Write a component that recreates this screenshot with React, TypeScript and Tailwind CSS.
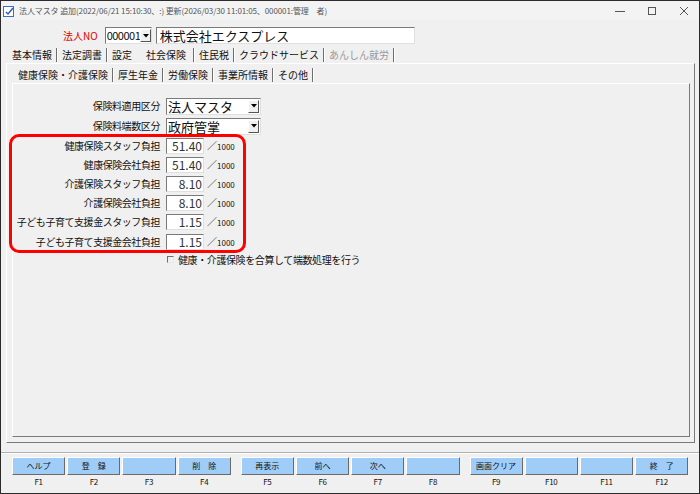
import React from 'react';

const mainTabs = [
  { label: '基本情報', sep: true },
  { label: '法定調書', sep: true },
  { label: '設定', sep: false },
  { label: '社会保険', sep: true, active: true },
  { label: '住民税', sep: true },
  { label: 'クラウドサービス', sep: true },
  { label: 'あんしん就労', sep: true, disabled: true },
];

const subTabs = ['健康保険・介護保険', '厚生年金', '労働保険', '事業所情報', 'その他'];

const rates = [
  { label: '健康保険スタッフ負担', value: '51.40' },
  { label: '健康保険会社負担', value: '51.40' },
  { label: '介護保険スタッフ負担', value: '8.10' },
  { label: '介護保険会社負担', value: '8.10' },
  { label: '子ども子育て支援金スタッフ負担', value: '1.15' },
  { label: '子ども子育て支援金会社負担', value: '1.15' },
];

const fkeys = [
  ['ヘルプ', '登　録', '', '削　除'],
  ['再表示', '前へ', '次へ', ''],
  ['画面クリア', '', '', '終　了'],
];

function Separator() {
  return <span className="w-[2px] h-[14px] border-l border-[#6e6e6e] border-r border-r-white" />;
}

function DropButton() {
  return (
    <div className="flex items-center justify-center w-[11px] h-[13px] bg-[#f0f0f0] border border-t-white border-l-white border-r-[#555] border-b-[#555]">
      <svg width="6" height="4" viewBox="0 0 6 4">
        <path d="M0 0h6L3 3.5z" fill="#000" />
      </svg>
    </div>
  );
}

function SelectBox({ value }: { value: string }) {
  return (
    <div className="flex items-center justify-between w-[95px] h-[17px] bg-white border border-t-[#7a7a7a] border-l-[#7a7a7a] border-r-[#e0e0e0] border-b-[#e0e0e0] pl-[1px] pr-[1px]">
      <span className="text-[13px] leading-none text-[#111]">{value}</span>
      <DropButton />
    </div>
  );
}

export default function App() {
  return (
    <div className="relative w-[700px] h-[494px] bg-[#f0f0f0] border border-[#2b2b2b] overflow-hidden flex flex-col font-['Noto_Sans_CJK_JP',sans-serif] text-[#111]">
      {/* Title bar */}
      <div className="h-[19px] flex items-center bg-[#f3f3f3] shrink-0">
        <svg className="ml-[2px]" width="12" height="12" viewBox="0 0 12 12">
          <rect x="0.5" y="1.5" width="10" height="10" fill="#fff" stroke="#3b6fc4" />
          <path d="M3 7l2 2 5-6" stroke="#2d5fb8" strokeWidth="1.5" fill="none" />
        </svg>
        <span className="ml-[4px] text-[8px] leading-none text-[#555] tracking-[-0.1px] whitespace-nowrap">
          法人マスタ 追加(2022/06/21 15:10:30、:) 更新(2026/03/30 11:01:05、000001:管理　者)
        </span>
        <div className="ml-auto flex items-center gap-[22px] mr-[10px]">
          <svg width="10" height="10" viewBox="0 0 10 10">
            <path d="M0 5.5h10" stroke="#555" strokeWidth="1" />
          </svg>
          <svg width="10" height="10" viewBox="0 0 10 10">
            <rect x="1.5" y="1.5" width="7" height="7" fill="none" stroke="#555" strokeWidth="1" />
          </svg>
          <svg width="10" height="10" viewBox="0 0 10 10">
            <path d="M1 1l8 8M9 1l-8 8" stroke="#555" strokeWidth="1" />
          </svg>
        </div>
      </div>

      {/* Header row */}
      <div className="mt-[7px] h-[17px] flex items-center pl-[62px] shrink-0">
        <span className="text-[10px] text-[#e00000] leading-none">法人NO</span>
        <div className="ml-[7px] flex items-center w-[47px] h-[17px] bg-white border border-t-[#7a7a7a] border-l-[#7a7a7a] border-r-[#e0e0e0] border-b-[#e0e0e0] pl-[1px]">
          <span className="text-[11px] leading-none tracking-[-0.5px]">000001</span>
          <div className="ml-auto mr-[1px]">
            <DropButton />
          </div>
        </div>
        <div className="ml-[4px] flex items-center w-[259px] h-[17px] bg-white border border-t-[#7a7a7a] border-l-[#7a7a7a] border-r-[#e0e0e0] border-b-[#e0e0e0] pl-[3px]">
          <span className="text-[13px] leading-none">株式会社エクスプレス</span>
        </div>
      </div>

      {/* Main tabs */}
      <div className="mt-[3px] h-[16px] flex items-center pl-[7px] shrink-0 text-[10px] leading-none">
        {mainTabs.map((t) => (
          <React.Fragment key={t.label}>
            <span
              className={
                (t.active ? 'pl-[10px] pr-[7px] ' : 'px-[4px] ') +
                (t.disabled ? 'text-[#9a9a9a]' : 'text-[#111]')
              }
            >
              {t.label}
            </span>
            {t.sep && <Separator />}
          </React.Fragment>
        ))}
      </div>

      {/* Outer panel */}
      <div className="ml-[5px] w-[689px] h-[380px] flex flex-col border border-t-white border-l-white border-r-[#7a7a7a] border-b-[#7a7a7a] shrink-0">
        <div className="mt-[3px] h-[16px] flex items-center pl-[7px] text-[10px] leading-none">
          {subTabs.map((t, i) => (
            <React.Fragment key={t}>
              <span className={i === 0 ? 'pl-[4px] pr-[4px]' : 'px-[4px]'}>{t}</span>
              <Separator />
            </React.Fragment>
          ))}
        </div>

        {/* Inner panel */}
        <div className="ml-[5px] w-[678px] h-[354px] border border-t-white border-l-white border-r-[#7a7a7a] border-b-[#7a7a7a] pt-[12px]">
          <div className="flex items-center h-[20px]">
            <div className="w-[147px] text-right text-[10px] tracking-[-0.4px] leading-none">保険料適用区分</div>
            <div className="ml-[6px]">
              <SelectBox value="法人マスタ" />
            </div>
          </div>
          <div className="flex items-center h-[20px]">
            <div className="w-[147px] text-right text-[10px] tracking-[-0.4px] leading-none">保険料端数区分</div>
            <div className="ml-[6px]">
              <SelectBox value="政府管掌" />
            </div>
          </div>

          {rates.map((r) => (
            <div key={r.label} className="flex items-center h-[19.2px]">
              <div className="w-[147px] text-right text-[10px] tracking-[-0.45px] leading-none whitespace-nowrap">
                {r.label}
              </div>
              <div className="ml-[6px] flex items-center justify-end w-[38px] h-[16px] bg-white border border-t-[#7a7a7a] border-l-[#7a7a7a] border-r-[#e0e0e0] border-b-[#e0e0e0] pr-[1px]">
                <span className="text-[12px] leading-none text-[#333]">{r.value}</span>
              </div>
              <span className="ml-[3px] text-[10px] leading-none">／</span>
              <span className="text-[8px] leading-none mt-[2px]">1000</span>
            </div>
          ))}

          <div className="flex items-center h-[15px] mt-[1px] ml-[154px]">
            <span className="w-[7px] h-[7px] border border-t-[#6e6e6e] border-l-[#6e6e6e] border-r-[#e8e8e8] border-b-[#e8e8e8]" />
            <span className="ml-[4px] text-[10px] tracking-[-0.4px] leading-none">
              健康・介護保険を合算して端数処理を行う
            </span>
          </div>
        </div>
      </div>

      {/* Footer */}
      <div className="mt-[9px] border-t border-[#b0b0b0] shrink-0">
        <div className="border-t border-white pt-[3px] pl-[11px] flex gap-[10px]">
          {fkeys.map((group, gi) => (
            <div key={gi} className="flex gap-[2px]">
              {group.map((label, i) => (
                <div key={i} className="flex flex-col items-center w-[53.2px]">
                  <div className="w-full h-[18px] flex items-center justify-center bg-[#9fcdf8] border border-t-white border-l-white border-r-[#6a6a6a] border-b-[#6a6a6a]">
                    <span className="text-[8px] leading-none">{label}</span>
                  </div>
                  <span className="mt-[3px] text-[8px] leading-none tracking-[-0.3px]">F{gi * 4 + i + 1}</span>
                </div>
              ))}
            </div>
          ))}
        </div>
      </div>

      {/* Highlight box */}
      <div className="absolute left-[8px] top-[133px] w-[237px] h-[119px] border-[3px] border-[#ff0000] rounded-[10px] pointer-events-none" />
    </div>
  );
}
